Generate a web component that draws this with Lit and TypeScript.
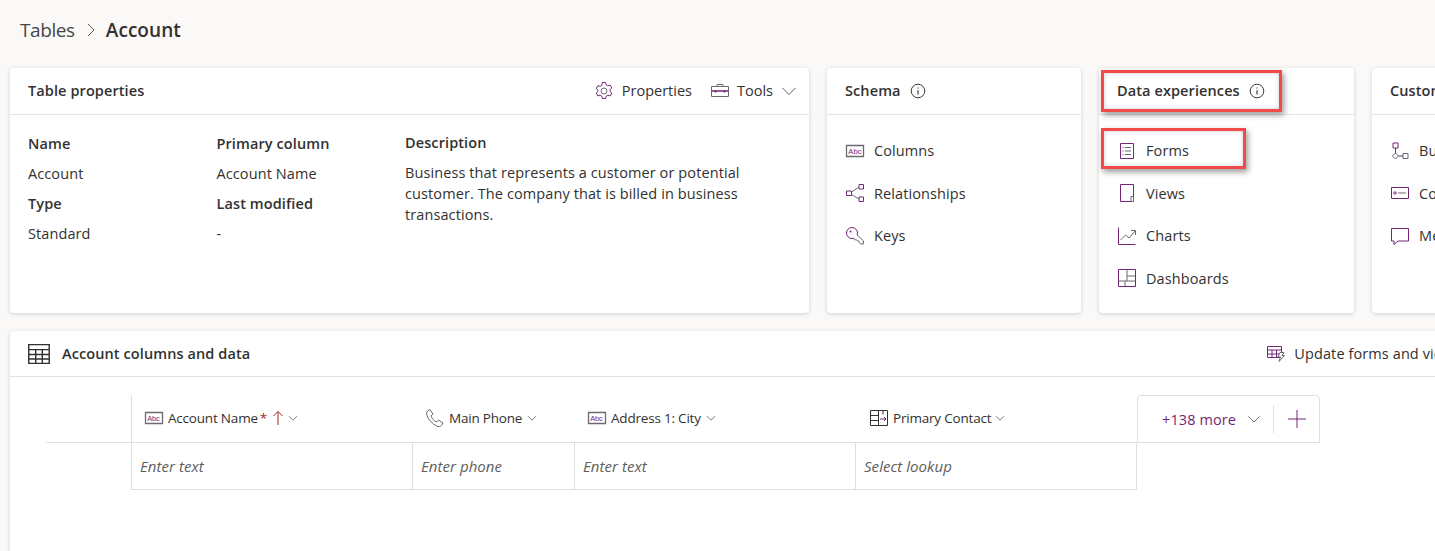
import { LitElement, html, css, svg } from "lit";
import { customElement } from "lit/decorators.js";

const P = "#742774";
const G = "#6b6a70";

const icon = (size: number, body: unknown) => html`<svg class="ic" width=${size} height=${size} viewBox="0 0 20 20" fill="none" stroke-width="1">${body}</svg>`;

const icons: Record<string, (s?: number) => unknown> = {
  gear: (s = 20) => icon(s, svg`<path stroke=${P} d="M8.300 1.500h3.400l.5 2.400 1.600.9 2.300-.8 1.700 3-1.800 1.600v1.800l1.800 1.600-1.700 3-2.300-.8-1.600.9-.5 2.400H8.300l-.5-2.400-1.600-.9-2.300.8-1.700-3 1.800-1.600V9.200L2.200 7.600l1.700-3 2.300.8 1.600-.9z"/><circle cx="10" cy="10" r="3" stroke=${G}/>`),
  tools: (s = 20) => icon(s, svg`<path stroke=${G} d="M1.500 5.500h17v10h-17z"/><path stroke=${G} d="M7 5.500v-2h6v2"/><path stroke=${P} stroke-width="1.400" d="M1.500 10h17M5.500 9v2.500M14.500 9v2.500"/>`),
  abc: (s = 20) => icon(s, svg`<path stroke=${G} stroke-width="1.300" d="M1.500 4.500h17v11h-17z"/><text x="3.300" y="12.600" font-size="7.500" fill=${P} stroke="none" font-family="Liberation Sans, sans-serif">Abc</text>`),
  rel: (s = 20) => icon(s, svg`<path stroke=${P} d="M1.500 8h5v4.500h-5zM14 1.500h4.500V6H14zM14 14h4.500v4.500H14z"/><path stroke=${G} d="M6.500 9 14 4M6.500 11.500 14 16"/>`),
  key: (s = 20) => icon(s, svg`<path stroke=${P} d="M7 1.500a5.500 5.500 0 0 1 5.500 5.500c0 .7-.1 1.300-.4 1.900"/><path stroke=${P} d="M7 1.500A5.500 5.500 0 0 0 7 12.500c.7 0 1.400-.1 2-.4"/><circle cx="5.500" cy="5.500" r="1" fill=${P}/><path stroke=${G} d="m12.100 8.900 6.400 6v3h-3l-1.500-1.500v-1.400h-1.500l-1-1.200h-1.600l-1.200-1.700"/>`),
  forms: (s = 20) => icon(s, svg`<path stroke=${P} d="M3.500 2.500h13v15h-13z"/><path stroke=${G} d="M8 6.500h6M8 10h6M8 13.500h6"/><path stroke=${P} d="M5.500 6.500h1M5.500 10h1M5.500 13.500h1"/>`),
  views: (s = 20) => icon(s, svg`<path stroke=${P} d="M3.500 1.500h13v17h-13z"/><path stroke=${G} d="M14 13.500h2.500v5H14z"/>`),
  charts: (s = 20) => icon(s, svg`<path stroke=${P} d="M1.500 1.500v17h17"/><path stroke=${G} d="m3.500 14 5-5 3.500 3 6-7M14 4.500h4.500V9"/>`),
  dash: (s = 20) => icon(s, svg`<path stroke=${P} d="M1.500 1.500h17v17h-17z"/><path stroke=${G} d="M10 1.500V13M10 8h8.500M1.500 13h17M8 13v5.500"/>`),
  info: (s = 16) => icon(s, svg`<circle cx="10" cy="10" r="8.500" stroke="#323130" stroke-width="1.200"/><path stroke="#323130" stroke-width="1.400" d="M10 9v5.500M10 5.500v1.500"/>`),
  flow: (s = 20) => icon(s, svg`<path stroke=${P} d="M3 2h5v5H3zM5.500 7v5M8.500 15H13"/><path stroke=${G} d="M5.500 12 8.500 15 5.500 18 2.500 15zM13 12.500h5v5h-5z"/>`),
  card: (s = 20) => icon(s, svg`<path stroke=${P} d="M1.500 4.500h17v11h-17z"/><path stroke=${G} d="M8 10h8"/><circle cx="5" cy="10" r="1.200" stroke=${P}/>`),
  msg: (s = 20) => icon(s, svg`<path stroke=${P} d="M1.500 2.500h17V15H8l-4 3.500V15H1.500z"/>`),
  table: (s = 22) => icon(s, svg`<path stroke="#323130" stroke-width="1.300" d="M.7 1.500h18.600v17H.7zM.7 6h18.600M.7 10.500h18.600M.7 14.500h18.600M7 6v12.500M13 6v12.500"/>`),
  update: (s = 20) => icon(s, svg`<path stroke=${P} d="M1.500 2.500h14v11h-14zM1.500 6h14M1.500 10h14M6 6v7.500M10.500 6v7.500"/><path fill="#fff" stroke=${G} d="M14 8.500h4l-2 3h2.500l-5.500 6 1.500-4.500H12z"/>`),
  phone: (s = 20) => icon(s, svg`<path stroke=${G} d="M2.500 3 5 1.500l3 4.500-2 2c.8 2.500 3 4.800 5.500 6l2-2 4.500 3-1.500 2.500c-1 1.200-3 1.500-5 .5C7 15.500 3.500 12 2 7.500c-.6-2-.5-3.500.5-4.500z"/>`),
  lookup: (s = 20) => icon(s, svg`<path stroke="#323130" d="M1.500 2.500h17v15h-17zM1.500 7.500h8M1.500 12.500h8M9.500 2.500v15M14 2.500v4"/><path stroke=${P} d="M11 11h6M15 9l2 2-2 2"/>`),
};

const chevron = (size: number, color = "#605e5c") => html`<svg class="ic" width=${size} height=${size} viewBox="0 0 16 16" fill="none" stroke=${color} stroke-width="1"><path d="m1.500 5 6.500 6.500L14.500 5"/></svg>`;

@customElement("app-root")
export class AppRoot extends LitElement {
  static styles = css`
    :host {
      display: block;
      width: 1435px;
      height: 551px;
      overflow: hidden;
      background: #faf9f8;
      color: #323130;
      font-family: "Open Sans", "Noto Sans", sans-serif;
      font-size: 14.500px;
      letter-spacing: 0.1px;
    }
    .ic { display: block; flex: none; }
    .crumbs {
      height: 60px;
      display: flex;
      align-items: center;
      padding-left: 20px;
      font-size: 19px;
      letter-spacing: -0.4px;
      color: #484644;
    }
    .crumbs .sep { margin: 0 8px 0 11px; }
    .crumbs b { font-weight: 600; color: #323130; letter-spacing: 0.05px; }
    .cards {
      display: flex;
      gap: 18px;
      margin: 8px 0 18px 10px;
      width: 1600px;
    }
    .card {
      position: relative;
      background: #fff;
      border-radius: 4px;
      box-shadow: 0 1px 4px rgba(0, 0, 0, 0.16);
      height: 245px;
      flex: none;
    }
    .head {
      height: 46px;
      border-bottom: 1px solid #e4e3e2;
      display: flex;
      align-items: center;
      padding: 0 18px;
      font-weight: 600;
      gap: 9px;
    }
    .title { margin-top: -2px; }
    .actions {
      margin-left: auto;
      display: flex;
      align-items: center;
      font-weight: 400;
      margin-right: -6px;
      letter-spacing: 0;
    }
    .actions span { margin: -2px 18px 0 8px; }
    .actions span.tools { margin-right: 8px; margin-left: 7px; }
    .props {
      display: grid;
      grid-template-columns: 188.500px 188.500px 1fr;
      padding: 13px 18px;
    }
    .props > div { display: grid; grid-auto-rows: 30px; align-items: center; }
    .props b { font-weight: 600; }
    .props .desc-col { display: block; }
    .desc-col b { display: block; line-height: 30px; }
    .desc { line-height: 21px; width: 350px; margin-top: 4px; }
    .links { padding: 14.400px 18px; }
    .link {
      height: 42.500px;
      display: flex;
      align-items: center;
      gap: 9px;
    }
    .mark {
      position: absolute;
      border: 3px solid #f04a4a;
      box-shadow: 2px 3px 6px rgba(0, 0, 0, 0.4), inset 0 0 4px rgba(0, 0, 0, 0.2);
      box-sizing: border-box;
      pointer-events: none;
    }
    .mark.one { left: 2px; top: 2px; width: 181px; height: 42px; }
    .mark.two { left: 2px; top: 60px; width: 145px; height: 41px; }
    .grid-card {
      margin-left: 10px;
      width: 1500px;
      height: 240px;
      background: #fff;
      border-radius: 4px;
      box-shadow: 0 1px 4px rgba(0, 0, 0, 0.16);
    }
    .grid-head {
      height: 45px;
      border-bottom: 1px solid #e4e3e2;
      display: flex;
      align-items: center;
      padding-left: 18px;
      gap: 12px;
      font-weight: 600;
    }
    .update {
      display: flex;
      align-items: center;
      gap: 8px;
      font-weight: 400;
      margin-left: 1004px;
      white-space: nowrap;
    }
    .table {
      display: grid;
      grid-template-columns: 85px 282px 162px 281px 281px 183px;
      grid-template-rows: 48px 47px;
      margin: 18px 0 0 36px;
    }
    .cell {
      display: flex;
      align-items: center;
      box-sizing: border-box;
      border-bottom: 1px solid #e1dfdd;
    }
    .th {
      font-size: 13.500px;
      font-weight: 500;
      padding: 0 0 1px 12px;
      gap: 4px;
      letter-spacing: -0.2px;
    }
    .th .ic:last-child { margin-left: 1px; }
    .th.first .ic:last-child { margin-left: -1px; }
    .th.last { padding-left: 13px; }
    .th.last .ic:last-child { margin-left: 0; }
    .th.first { border-left: 1px solid #e1dfdd; }
    .req { color: #a4262c; margin-left: -2px; }
    .td {
      font-style: italic;
      font-size: 15px;
      letter-spacing: 0.05px;
      color: #605e5c;
      padding-left: 8px;
      border-right: 1px solid #e1dfdd;
    }
    .td.first { border-left: 1px solid #e1dfdd; }
    .more {
      border: 1px solid #e1dfdd;
      border-radius: 4px 4px 0 0;
      color: #742774;
      font-weight: 500;
      padding-left: 24px;
    }
    .more .chev { margin: 0 12px 0 11px; }
    .more .div { width: 1px; height: 28px; background: #e1dfdd; }
    .more .plus { margin-left: 13px; }
  `;

  private link(name: string, label: string) {
    return html`<div class="link">${icons[name]()}<span>${label}</span></div>`;
  }

  render() {
    return html`
      <div class="crumbs">
        <span>Tables</span>
        <svg class="ic sep" width="12" height="14" viewBox="0 0 12 14" fill="none" stroke="#605e5c"><path d="m2 1 6 6-6 6"/></svg>
        <b>Account</b>
      </div>

      <div class="cards">
        <section class="card" style="width:799px">
          <div class="head">
            <span class="title">Table properties</span>
            <div class="actions">
              ${icons.gear()}<span>Properties</span>
              ${icons.tools()}<span class="tools">Tools</span>${chevron(16)}
            </div>
          </div>
          <div class="props">
            <div><b>Name</b><span>Account</span><b>Type</b><span>Standard</span></div>
            <div><b>Primary column</b><span>Account Name</span><b>Last modified</b><span>-</span></div>
            <div class="desc-col">
              <b>Description</b>
              <div class="desc">Business that represents a customer or potential customer. The company that is billed in business transactions.</div>
            </div>
          </div>
        </section>

        <section class="card" style="width:254px">
          <div class="head"><span class="title">Schema</span> ${icons.info()}</div>
          <div class="links">
            ${this.link("abc", "Columns")}
            ${this.link("rel", "Relationships")}
            ${this.link("key", "Keys")}
          </div>
        </section>

        <section class="card" style="width:255px">
          <div class="head"><span class="title">Data experiences</span> ${icons.info()}</div>
          <div class="links">
            ${this.link("forms", "Forms")}
            ${this.link("views", "Views")}
            ${this.link("charts", "Charts")}
            ${this.link("dash", "Dashboards")}
          </div>
          <div class="mark one"></div>
          <div class="mark two"></div>
        </section>

        <section class="card" style="width:255px">
          <div class="head"><span class="title">Customizations</span></div>
          <div class="links">
            ${this.link("flow", "Business rules")}
            ${this.link("card", "Commands")}
            ${this.link("msg", "Messages")}
          </div>
        </section>
      </div>

      <section class="grid-card">
        <div class="grid-head">
          ${icons.table()}
          <span>Account columns and data</span>
          <div class="update">${icons.update()}<span>Update forms and views</span></div>
        </div>
        <div class="table">
          <div class="cell"></div>
          <div class="cell th first">${icons.abc()}<span>Account Name</span><span class="req">*</span>
            <svg class="ic" width="14" height="16" viewBox="0 0 14 16" fill="none" stroke="#a4262c"><path d="M7 15V1.500M2.500 6 7 1.500 11.500 6"/></svg>${chevron(10, "#323130")}</div>
          <div class="cell th">${icons.phone()}<span>Main Phone</span>${chevron(10, "#323130")}</div>
          <div class="cell th">${icons.abc()}<span>Address 1: City</span>${chevron(10, "#323130")}</div>
          <div class="cell th last">${icons.lookup()}<span>Primary Contact</span>${chevron(10, "#323130")}</div>
          <div class="cell more">
            <span>+138 more</span>
            <span class="chev">${chevron(14)}</span>
            <span class="div"></span>
            <svg class="ic plus" width="20" height="20" viewBox="0 0 20 20" fill="none" stroke=${P}><path d="M1 10h18M10 1v18"/></svg>
          </div>
          <div></div>
          <div class="cell td first">Enter text</div>
          <div class="cell td">Enter phone</div>
          <div class="cell td">Enter text</div>
          <div class="cell td">Select lookup</div>
        </div>
      </section>
    `;
  }
}
